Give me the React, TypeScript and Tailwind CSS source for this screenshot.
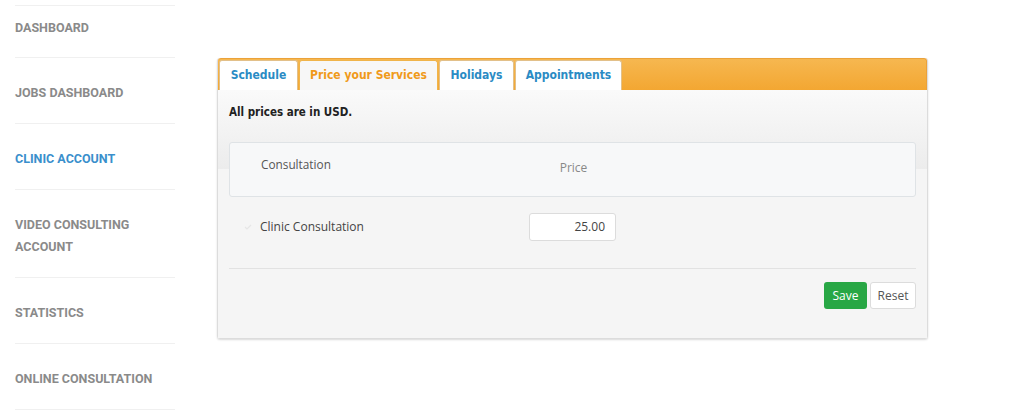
import React from "react";

const menu = [
  { label: "DASHBOARD" },
  { label: "JOBS DASHBOARD" },
  { label: "CLINIC ACCOUNT", active: true },
  { label: "VIDEO CONSULTING ACCOUNT" },
  { label: "STATISTICS" },
  { label: "ONLINE CONSULTATION" },
];

const tabs = [
  { label: "Schedule", w: "w-[79px]" },
  { label: "Price your Services", w: "w-[139px]", active: true },
  { label: "Holidays", w: "w-[75px]" },
  { label: "Appointments", w: "w-[107px]" },
];

const Sidebar = () => {
  return (
    <div className="w-[175px] shrink-0 pl-[15px] pt-[5px] font-['Roboto',sans-serif]">
      <div className="border-t border-[#f0f0f0]">
        {menu.map((item, i) => (
          <div
            key={item.label}
            className={`border-b border-[#f0f0f0] pr-4 ${i === 0 ? "pt-[11px] pb-[18px]" : "pt-[24px] pb-[19px]"}`}
          >
            <div
              className={`text-[12.5px] font-bold leading-[22px] ${
                item.active ? "text-[#3a8fcc]" : "text-[#8a8a8a]"
              }`}
            >
              {item.label}
            </div>
          </div>
        ))}
      </div>
    </div>
  );
};

const PricePanel = () => {
  return (
    <div className="w-[711px] rounded-[3px] border-x border-b border-[#dcdcdc] shadow-[0_1px_2px_rgba(0,0,0,0.15)]">
      {/* tab strip */}
      <div className="flex h-[32px] items-end gap-px rounded-t-[3px] border-t border-r border-[#eba23a] bg-[linear-gradient(to_bottom,#f6b750,#f3a732)] pl-px">
        {tabs.map((t) => (
          <div
            key={t.label}
            className={`${t.w} flex h-[30px] items-center justify-center rounded-t-[3px] border border-b-0 pb-[2px] font-['DejaVu_Sans_Condensed','DejaVu_Sans',sans-serif] text-[12px] font-bold ${
              t.active
                ? "border-[#f0b44a] bg-[#f7f7f7] text-[#f09a1a]"
                : "border-[#e2c08a] bg-white text-[#2a8bc4]"
            }`}
          >
            {t.label}
          </div>
        ))}
      </div>

      {/* body */}
      <div className="h-[248px] bg-[#f5f5f5] bg-[linear-gradient(to_bottom,#fafafa,#ececec)] bg-[length:100%_79px] bg-no-repeat px-[11px] pt-[14px]">
        <div className="font-['DejaVu_Sans_Condensed','DejaVu_Sans',sans-serif] text-[11.5px] font-bold leading-[16px] text-[#222]">
          All prices are in USD.
        </div>

        <div className="font-['Open_Sans',sans-serif] text-[12px]">
          <div className="mt-[22px] grid h-[55px] grid-cols-[300px_87px] rounded-[3px] border border-[#dfe3e6] bg-[#f7f8f9]">
            <div className="pl-[31px] pt-[13px] text-[11.8px] text-[#555]">Consultation</div>
            <div className="pt-[16px] text-center text-[#888]">Price</div>
          </div>

          <div className="grid h-[72px] grid-cols-[300px_87px] border-b border-[#e2e2e2] pt-[16px]">
            <div className="flex h-[28px] items-center pl-[15px] text-[#444]">
              <svg width="8" height="6" viewBox="0 0 8 6" className="mr-[8px]">
                <path d="M1 3l2 2 4-4" fill="none" stroke="#e6e6e6" strokeWidth="1.2" />
              </svg>
              Clinic Consultation
            </div>
            <div className="flex h-[28px] items-center justify-end rounded-[3px] border border-[#dcdcdc] bg-white pr-[10px] text-[#444]">
              25.00
            </div>
          </div>

          <div className="flex justify-end gap-[3px] pt-[13px]">
            <button className="h-[27px] w-[43px] rounded-[3px] bg-[#28a745] text-[12px] text-white">
              Save
            </button>
            <button className="h-[27px] w-[46px] rounded-[3px] border border-[#dcdcdc] bg-white text-[12px] text-[#555]">
              Reset
            </button>
          </div>
        </div>
      </div>
    </div>
  );
};

export default function App() {
  return (
    <div className="flex h-[414px] w-[1024px] overflow-hidden bg-white">
      <Sidebar />
      <div className="pl-[42px] pt-[58px]">
        <PricePanel />
      </div>
    </div>
  );
}
